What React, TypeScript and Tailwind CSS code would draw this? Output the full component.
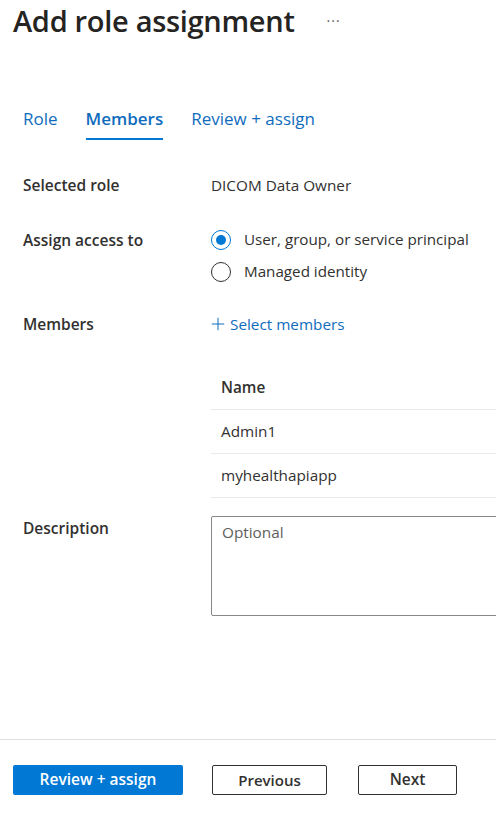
import { Plus } from 'lucide-react'

// Add role assignment - Members tab

const members = ['Admin1', 'myhealthapiapp']

function Radio({ checked, label }: { checked?: boolean; label: string }) {
  return (
    <label className="flex items-center gap-[13px] h-[32px]">
      <span
        className={`w-[20px] h-[20px] rounded-full border flex items-center justify-center ${
          checked ? 'border-[#0078d4]' : 'border-[#323130]'
        }`}
      >
        {checked && <span className="w-[10px] h-[10px] rounded-full bg-[#0078d4]" />}
      </span>
      <span className="text-[15.2px] text-[#323130]">{label}</span>
    </label>
  )
}

export default function App() {
  return (
    <div
      className="w-[496px] h-[814px] bg-white overflow-hidden flex flex-col text-[#323130]"
      style={{ fontFamily: '"Open Sans", "Noto Sans", sans-serif' }}
    >
      {/* Header */}
      <div className="flex items-center pl-[13px] h-[40px]">
        <h1 className="text-[29px] font-semibold text-[#252423] leading-none tracking-[-0.3px]">Add role assignment</h1>
        <span className="ml-[32px] text-[14px] text-[#605e5c] tracking-[1px]">···</span>
      </div>

      {/* Tabs */}
      <div className="flex gap-[28px] pl-[23px] mt-[66px] text-[17px] text-[#0f6cbd]">
        <div className="pb-[8px]">Role</div>
        <div className="pb-[6px] font-semibold border-b-2 border-[#0078d4]">Members</div>
        <div className="pb-[8px]">Review + assign</div>
      </div>

      {/* Form */}
      <div className="pl-[23px] mt-[34px] flex flex-col text-[15.3px]">
        <div className="grid grid-cols-[188px_1fr] items-center h-[24px]">
          <div className="text-[15.5px] font-semibold">Selected role</div>
          <div>DICOM Data Owner</div>
        </div>

        <div className="grid grid-cols-[188px_1fr] mt-[26px]">
          <div className="text-[15.5px] font-semibold pt-[5px]">Assign access to</div>
          <div className="flex flex-col">
            <Radio checked label="User, group, or service principal" />
            <Radio label="Managed identity" />
          </div>
        </div>

        <div className="grid grid-cols-[188px_1fr] mt-[25px] items-center">
          <div className="text-[15.5px] font-semibold">Members</div>
          <div className="flex items-center gap-[2px] text-[#0f6cbd]">
            <Plus className="w-[20px] h-[20px] -ml-[3px]" strokeWidth={1.2} />
            Select members
          </div>
        </div>

        {/* Members table */}
        <div className="ml-[188px] mt-[30px] flex flex-col">
          <div className="h-[44px] flex items-center pl-[10px] font-semibold border-b border-[#edebe9]">Name</div>
          {members.map((m) => (
            <div key={m} className="h-[44px] flex items-center pl-[10px] border-b border-[#edebe9]">
              {m}
            </div>
          ))}
        </div>

        <div className="grid grid-cols-[188px_1fr] mt-[18px]">
          <div className="text-[15.5px] font-semibold pt-[1px]">Description</div>
          <textarea
            placeholder="Optional"
            className="h-[100px] w-[300px] border border-[#8a8886] rounded-[2px] px-[10px] py-[4px] placeholder:text-[#605e5c] resize-none"
          />
        </div>
      </div>

      {/* Footer */}
      <div className="mt-auto border-t border-[#e1dfdd] h-[75px] flex items-start pt-[25px] pl-[13px] gap-[29px]">
        <button className="w-[170px] h-[30px] bg-[#0078d4] text-white text-[15.5px] font-semibold rounded-[2px]">
          Review + assign
        </button>
        <button className="w-[115px] h-[30px] border border-[#323130] text-[15px] font-semibold rounded-[2px]">
          Previous
        </button>
        <button className="w-[99px] h-[30px] border border-[#323130] text-[15.5px] font-semibold rounded-[2px] ml-[2px]">
          Next
        </button>
      </div>
    </div>
  )
}
